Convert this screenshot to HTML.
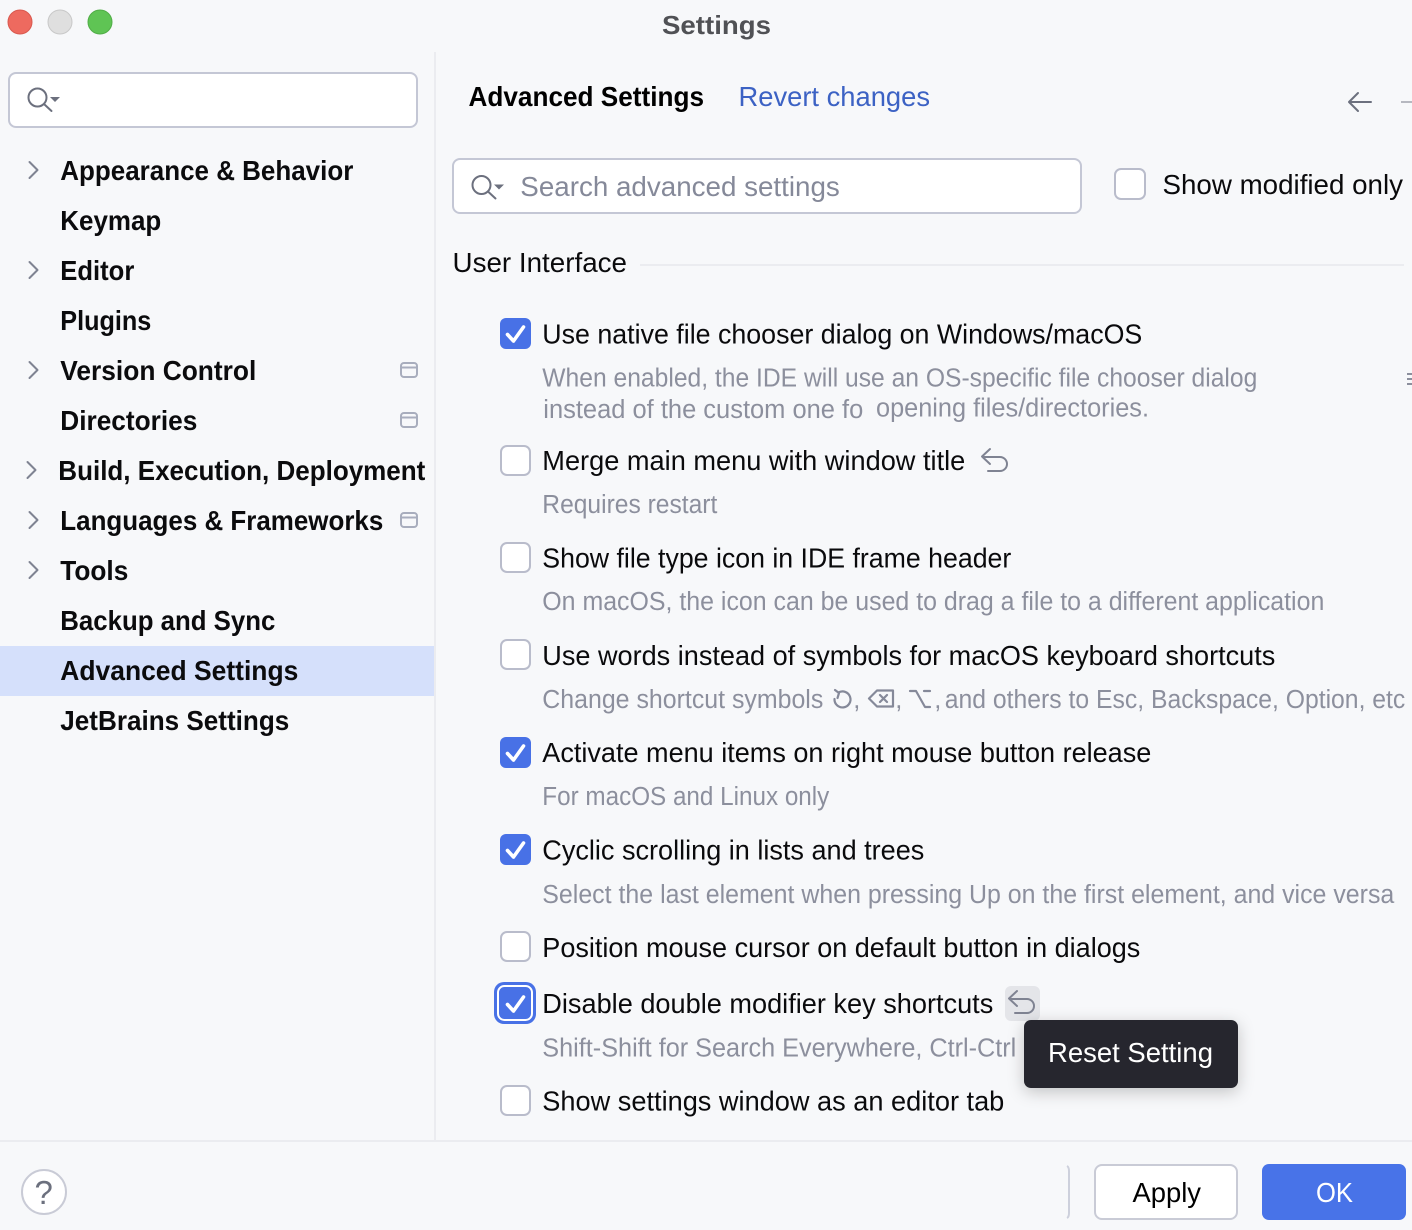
<!DOCTYPE html>
<html><head><meta charset="utf-8"><title>Settings</title>
<style>
html,body{margin:0;padding:0;width:1412px;height:1230px;overflow:hidden;background:#f7f8fa}
svg{display:block}
text{font-family:"Liberation Sans",sans-serif;font-size:27.5px;fill:#000}
.s text{font-weight:700;font-size:27.5px;fill:#0b0b0d}
.m text{font-size:27.5px;fill:#0a0a0c}
.d text{font-size:25.5px;fill:#8c8f9d}
.b{fill:#fff;stroke:#b9bccb;stroke-width:2}
.c{fill:#4871e6}
.k{fill:none;stroke:#fff;stroke-width:3.6;stroke-linecap:round;stroke-linejoin:round}
.i{fill:none;stroke:#6c707e;stroke-width:2;stroke-linecap:round;stroke-linejoin:round}
.g{fill:none;stroke:#a8adbd;stroke-width:2}
.a{fill:none;stroke:#7f8392;stroke-width:2;stroke-linecap:round;stroke-linejoin:round}
</style></head><body>
<svg width="1412" height="1230" viewBox="0 0 1412 1230" xmlns="http://www.w3.org/2000/svg">
<defs><filter id="sh" x="-20%" y="-30%" width="140%" height="170%"><feDropShadow dx="0" dy="4" stdDeviation="8" flood-color="#000" flood-opacity=".22"/></filter></defs>
<rect width="1412" height="1230" fill="#f7f8fa"/>
<!-- traffic lights -->
<circle cx="20" cy="22" r="12" fill="#ee6a5f" stroke="#d9584e"/>
<circle cx="60" cy="22" r="12" fill="#dfdfdf" stroke="#c8c8c8"/>
<circle cx="100" cy="22" r="12" fill="#5fc454" stroke="#50ad46"/>
<text x="662" y="34" textLength="109" lengthAdjust="spacingAndGlyphs" style="font-weight:700;font-size:26px;fill:#505155">Settings</text>
<!-- dividers -->
<rect x="434" y="52" width="2" height="1088" fill="#ebecf0"/>
<rect x="0" y="1140" width="1412" height="2" fill="#ebecf0"/>
<!-- sidebar -->
<rect x="0" y="646" width="434" height="50" fill="#d5e0fb"/>
<rect x="9" y="73" width="408" height="54" rx="7" class="b" style="stroke:#c4c7d5"/>
<g class="i"><circle cx="37.500" cy="97.500" r="9"/><path d="M44.500 104.500l7 6.500"/></g>
<path d="M50 97h10l-5 5z" fill="#6c707e"/>
<g class="a" transform="translate(.5 0)">
<path d="M29 162l8 8-8 8"/><path d="M29 262l8 8-8 8"/><path d="M29 362l8 8-8 8"/><path d="M27 462l8 8-8 8"/><path d="M29 512l8 8-8 8"/><path d="M29 562l8 8-8 8"/>
</g>
<g class="s" transform="translate(-.7 -1)">
<text x="61" y="181" textLength="293" lengthAdjust="spacingAndGlyphs">Appearance &amp; Behavior</text>
<text x="61" y="231" textLength="101" lengthAdjust="spacingAndGlyphs">Keymap</text>
<text x="61" y="281" textLength="74" lengthAdjust="spacingAndGlyphs">Editor</text>
<text x="61" y="331" textLength="91" lengthAdjust="spacingAndGlyphs">Plugins</text>
<text x="61" y="381" textLength="196" lengthAdjust="spacingAndGlyphs">Version Control</text>
<text x="61" y="431" textLength="137" lengthAdjust="spacingAndGlyphs">Directories</text>
<text x="59" y="481" textLength="367" lengthAdjust="spacingAndGlyphs">Build, Execution, Deployment</text>
<text x="61" y="531" textLength="323" lengthAdjust="spacingAndGlyphs">Languages &amp; Frameworks</text>
<text x="61" y="581" textLength="68" lengthAdjust="spacingAndGlyphs">Tools</text>
<text x="61" y="631" textLength="215" lengthAdjust="spacingAndGlyphs">Backup and Sync</text>
<text x="61" y="681" textLength="238" lengthAdjust="spacingAndGlyphs">Advanced Settings</text>
<text x="61" y="731" textLength="229" lengthAdjust="spacingAndGlyphs">JetBrains Settings</text>
</g>
<g class="g">
<rect x="401" y="363" width="16" height="14" rx="3"/><path d="M401 367.500h16"/>
<rect x="401" y="413" width="16" height="14" rx="3"/><path d="M401 417.500h16"/>
<rect x="401" y="513" width="16" height="14" rx="3"/><path d="M401 517.500h16"/>
</g>
<!-- header -->
<text x="468.500" y="106" textLength="235.500" lengthAdjust="spacingAndGlyphs" style="font-weight:700;font-size:27.5px">Advanced Settings</text>
<text x="738.500" y="106" textLength="191.500" lengthAdjust="spacingAndGlyphs" style="fill:#3c62c4">Revert changes</text>
<path d="M1349 102h22M1358 93l-9 9 9 9" class="i"/>
<path d="M1401 102h11" fill="none" stroke="#b6b8c0" stroke-width="2"/>
<!-- search -->
<rect x="453" y="159" width="628" height="54" rx="7" class="b" style="stroke:#c4c7d5"/>
<g class="i"><circle cx="481.500" cy="185" r="9"/><path d="M488.500 192l7 6.500"/></g>
<path d="M494 184.500h10l-5 5z" fill="#6c707e"/>
<text x="520.300" y="196" textLength="319.500" lengthAdjust="spacingAndGlyphs" style="fill:#858999">Search advanced settings</text>
<rect x="1115" y="169" width="30" height="30" rx="6" class="b"/>
<text x="1162.500" y="194" textLength="240.500" lengthAdjust="spacingAndGlyphs" style="fill:#0a0a0c">Show modified only</text>
<text x="452.500" y="272" textLength="174.500" lengthAdjust="spacingAndGlyphs" style="fill:#0a0a0c">User Interface</text>
<rect x="640" y="264" width="764" height="2" fill="#ebecf0"/>
<!-- checkboxes -->
<rect x="500" y="318" width="31" height="31" rx="6" class="c"/><path d="M507.500 334.500l6 6.500 10-14" class="k"/>
<rect x="501" y="446" width="29" height="29" rx="6" class="b"/>
<rect x="501" y="543" width="29" height="29" rx="6" class="b"/>
<rect x="501" y="640" width="29" height="29" rx="6" class="b"/>
<rect x="500" y="737" width="31" height="31" rx="6" class="c"/><path d="M507.500 753.500l6 6.500 10-14" class="k"/>
<rect x="500" y="834" width="31" height="31" rx="6" class="c"/><path d="M507.500 850.500l6 6.500 10-14" class="k"/>
<rect x="501" y="932" width="29" height="29" rx="6" class="b"/>
<rect x="494" y="982" width="42" height="42" rx="10" fill="#4871e6"/>
<rect x="498" y="986" width="34" height="34" rx="6.500" fill="#4871e6" stroke="#fff" stroke-width="2"/>
<path d="M507.500 1004.500l6 6.500 10-14" class="k"/>
<rect x="501" y="1086" width="29" height="29" rx="6" class="b"/>
<!-- main labels -->
<g class="m" transform="translate(-.7 0)">
<text x="543" y="343.500" textLength="600" lengthAdjust="spacingAndGlyphs">Use native file chooser dialog on Windows/macOS</text>
<text x="543" y="470" textLength="423" lengthAdjust="spacingAndGlyphs">Merge main menu with window title</text>
<text x="543" y="567.500" textLength="469" lengthAdjust="spacingAndGlyphs">Show file type icon in IDE frame header</text>
<text x="543" y="665" textLength="733" lengthAdjust="spacingAndGlyphs">Use words instead of symbols for macOS keyboard shortcuts</text>
<text x="543" y="762" textLength="609" lengthAdjust="spacingAndGlyphs">Activate menu items on right mouse button release</text>
<text x="543" y="859.500" textLength="382" lengthAdjust="spacingAndGlyphs">Cyclic scrolling in lists and trees</text>
<text x="543" y="957" textLength="598" lengthAdjust="spacingAndGlyphs">Position mouse cursor on default button in dialogs</text>
<text x="543" y="1013" textLength="451" lengthAdjust="spacingAndGlyphs">Disable double modifier key shortcuts</text>
<text x="543" y="1110.500" textLength="462" lengthAdjust="spacingAndGlyphs">Show settings window as an editor tab</text>
</g>
<g class="d" transform="translate(-.7 0)">
<text x="543" y="386.500" textLength="715" lengthAdjust="spacingAndGlyphs">When enabled, the IDE will use an OS-specific file chooser dialog</text>
<text x="544" y="418" textLength="320" lengthAdjust="spacingAndGlyphs">instead of the custom one fo</text>
<text x="876.700" y="416.500" textLength="273" lengthAdjust="spacingAndGlyphs">opening files/directories.</text>
<text x="543" y="513" textLength="175" lengthAdjust="spacingAndGlyphs">Requires restart</text>
<text x="543" y="610" textLength="782" lengthAdjust="spacingAndGlyphs">On macOS, the icon can be used to drag a file to a different application</text>
<text x="543" y="708" textLength="281" lengthAdjust="spacingAndGlyphs">Change shortcut symbols</text>
<text x="854" y="708">,</text>
<text x="896" y="708">,</text>
<text x="935" y="708">,</text>
<text x="945.500" y="708" textLength="460.500" lengthAdjust="spacingAndGlyphs">and others to Esc, Backspace, Option, etc</text>
<text x="543" y="805" textLength="287" lengthAdjust="spacingAndGlyphs">For macOS and Linux only</text>
<text x="543" y="903" textLength="852" lengthAdjust="spacingAndGlyphs">Select the last element when pressing Up on the first element, and vice versa</text>
<text x="543" y="1056.500" textLength="474" lengthAdjust="spacingAndGlyphs">Shift-Shift for Search Everywhere, Ctrl-Ctrl</text>
</g>
<!-- shortcut symbols -->
<g fill="none" stroke="#858999" stroke-width="2.2" stroke-linecap="round" stroke-linejoin="round">
<path d="M838.500 692.500a8 8 0 1 1-4 6.500M835 690l4 3-1.500 5"/>
<path d="M869 698.500l8-8h16v16h-16zM880 695l7 7M887 695l-7 7"/>
<path d="M910 691h6l9 16h5M924 691h6"/>
</g>
<path d="M1407 374h5M1407 379h5M1407 384h5" stroke="#8c8f9d" stroke-width="2" fill="none"/>
<!-- revert icons -->
<path d="M990 449l-8 7.500 8 7.500M983 457h17a7 7 0 0 1 0 14h-12" fill="none" stroke="#7f8392" stroke-width="2" stroke-linecap="round" stroke-linejoin="round"/>
<rect x="1005" y="986" width="35" height="35" rx="6" fill="#e4e5e9"/>
<path d="M1017 990l-8 7.500 8 7.500M1010 998h17a7 7 0 0 1 0 14h-12" fill="none" stroke="#7f8392" stroke-width="2" stroke-linecap="round" stroke-linejoin="round" transform="translate(0 1)"/>
<!-- tooltip -->
<rect x="1024" y="1020" width="214" height="68" rx="7" fill="#27282e" filter="url(#sh)"/>
<text x="1048" y="1062" textLength="165" lengthAdjust="spacingAndGlyphs" style="fill:#fff">Reset Setting</text>
<!-- footer -->
<circle cx="44" cy="1192" r="22" fill="#fff" stroke="#c9cbd6" stroke-width="2"/>
<text x="34.500" y="1204" style="font-size:33px;fill:#6c707e">?</text>
<path d="M1067 1166q2 1 2 5v42q0 4-2 5" fill="none" stroke="#cdd0dc" stroke-width="2"/>
<rect x="1095" y="1165" width="142" height="54" rx="7" class="b" style="stroke:#c9cbd6"/>
<text x="1132.500" y="1202" textLength="68.500" lengthAdjust="spacingAndGlyphs">Apply</text>
<rect x="1262" y="1164" width="144" height="56" rx="7" fill="#4873e8"/>
<text x="1316" y="1202" textLength="37" lengthAdjust="spacingAndGlyphs" style="fill:#fff">OK</text>
</svg>
</body></html>
